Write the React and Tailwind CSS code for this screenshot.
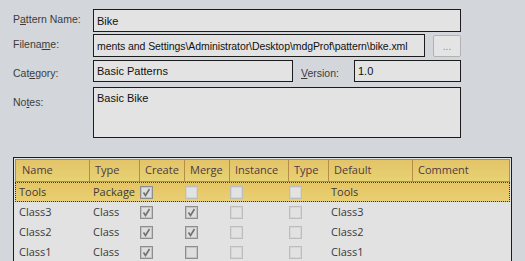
import React from 'react';

const labelFont = { fontFamily: '"Liberation Sans", Arial, sans-serif' };
const gridFont = { fontFamily: '"Open Sans", "Noto Sans", sans-serif' };

const cols = 'grid grid-cols-[74px_50px_45px_45px_59px_40px_84px_98px]';

const rows = [
  { name: 'Tools', type: 'Package', create: true, merge: false, mergeOn: false, def: 'Tools', selected: true },
  { name: 'Class3', type: 'Class', create: true, merge: true, mergeOn: true, def: 'Class3' },
  { name: 'Class2', type: 'Class', create: true, merge: true, mergeOn: true, def: 'Class2' },
  { name: 'Class1', type: 'Class', create: true, merge: false, mergeOn: true, def: 'Class1' },
];

function Check({ checked, enabled }) {
  return (
    <div
      className={`w-[13px] h-[13px] border flex items-center justify-center ${
        enabled ? 'border-[#8e8e8e] bg-[#dedede]' : 'border-[#bdbdbd] bg-[#e2e2e2]'
      }`}
    >
      <div className={`w-[11px] h-[11px] border ${enabled ? 'border-[#c4c4c4]' : 'border-[#d6d6d6]'} flex items-center justify-center`}>
        {checked && (
          <svg width="9" height="9" viewBox="0 0 9 9">
            <polyline points="1.5,4.5 3.5,7.5 7.5,1" fill="none" stroke="#707070" strokeWidth="1.6" />
          </svg>
        )}
      </div>
    </div>
  );
}

function Label({ children, className = '' }) {
  return <div className={`w-[80px] shrink-0 text-[10.5px] text-[#3c3c3c] ${className}`}>{children}</div>;
}

function Box({ className = '', children }) {
  return (
    <div className={`border border-[#1c1c1c] bg-[#e3e3e3] text-[#111] px-[3px] overflow-hidden whitespace-nowrap ${className}`}>
      {children}
    </div>
  );
}

export default function App() {
  return (
    <div className="w-[525px] h-[261px] bg-[#d3d6da] overflow-hidden pl-[13px] pt-[9px]" style={labelFont}>
      {/* Pattern name */}
      <div className="flex">
        <Label className="pt-[3px]"><span>P<u>a</u>ttern Name:</span></Label>
        <Box className="w-[368px] h-[23px] leading-[21px] pt-[1px] text-[11px]">Bike</Box>
      </div>

      {/* Filename */}
      <div className="flex mt-[2px]">
        <Label className="pt-[3px]">Filena<u>m</u>e:</Label>
        <Box className="w-[332px] h-[23px] leading-[21px] pt-[1px] px-[2px] text-[10.5px] tracking-[-0.08px]">
          ments and Settings\Administrator\Desktop\mdgProf\pattern\bike.xml
        </Box>
        <div className="ml-[8px] w-[28px] h-[22px] mt-[1px] rounded-[2px] border border-[#b2b2b2] bg-[#e4e4e4] text-[#8a8a8a] text-[10px] flex items-center justify-center">
          ...
        </div>
      </div>

      {/* Category / Version */}
      <div className="flex mt-[3px]">
        <Label className="pt-[6px]">Cat<u>e</u>gory:</Label>
        <Box className="w-[200px] h-[22px] leading-[20px] text-[11px]">Basic Patterns</Box>
        <div className="w-[61px] pl-[8px] pt-[6px] text-[10.5px] text-[#3c3c3c]"><u>V</u>ersion:</div>
        <Box className="w-[107px] h-[22px] leading-[20px] text-[11px]">1.0</Box>
      </div>

      {/* Notes */}
      <div className="flex mt-[5px]">
        <Label className="pt-[8px]">No<u>t</u>es:</Label>
        <Box className="w-[368px] h-[51px] leading-[20px] text-[11px]">Basic Bike</Box>
      </div>

      {/* Grid */}
      <div className="mt-[19px] w-[499px] border border-[#1c1c1c] bg-[#e2e2e2] p-[1px] h-[120px]" style={gridFont}>
        <div className={`${cols} h-[23px] border border-[#b68c48] bg-gradient-to-b from-[#e3c468] to-[#e6d274] text-[11px] text-[#4e3a44]`}>
          {['Name', 'Type', 'Create', 'Merge', 'Instance', 'Type', 'Default', 'Comment'].map((h, i) => (
            <div
              key={i}
              className={`flex items-center ${i === 0 ? 'pl-[6px]' : 'pl-[5px]'} ${i < 7 ? 'border-r border-[#b68c48]' : ''}`}
            >
              {h}
            </div>
          ))}
        </div>
        {rows.map((r) => (
          <div
            key={r.name}
            className={`${cols} h-[20px] text-[11px] text-[#3a3a3a] ${
              r.selected ? 'bg-gradient-to-b from-[#e6c463] to-[#e8d073] border border-dotted border-[#1e2bb0]' : 'border border-transparent'
            }`}
          >
            <div className="flex items-center pl-[3px]">{r.name}</div>
            <div className="flex items-center pl-[3px]">{r.type}</div>
            <div className="flex items-center"><Check checked={r.create} enabled /></div>
            <div className="flex items-center"><Check checked={r.merge} enabled={r.mergeOn} /></div>
            <div className="flex items-center"><Check checked={false} enabled={false} /></div>
            <div className="flex items-center"><Check checked={false} enabled={false} /></div>
            <div className="flex items-center pl-[2px]">{r.def}</div>
            <div />
          </div>
        ))}
      </div>
    </div>
  );
}
